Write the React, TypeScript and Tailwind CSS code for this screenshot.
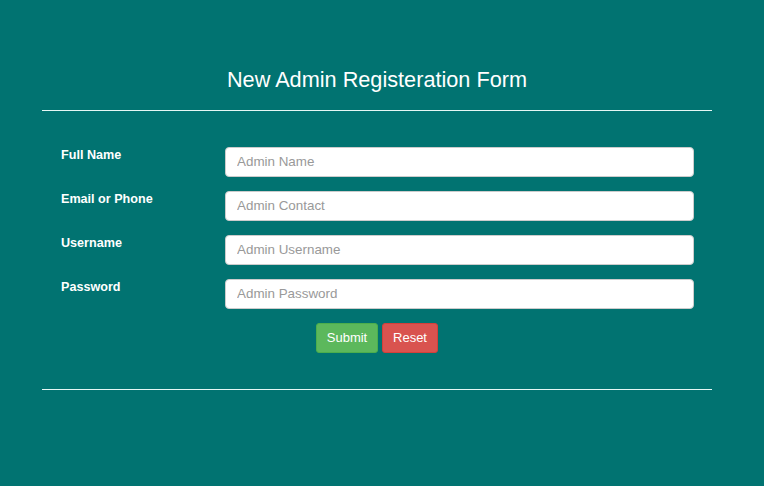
import React from "react";

const fields = [
  { label: "Full Name", placeholder: "Admin Name", type: "text" },
  { label: "Email or Phone", placeholder: "Admin Contact", type: "text" },
  { label: "Username", placeholder: "Admin Username", type: "text" },
  { label: "Password", placeholder: "Admin Password", type: "password" },
];

export default function App() {
  return (
    <div className="min-h-[486px] w-full bg-[#017371] font-['Liberation_Sans',Arial,sans-serif] text-white">
      <div className="ml-[42px] w-[670px] pt-[65px]">
        <h1 className="text-center text-[21.7px] leading-[30px] font-normal">New Admin Registeration Form</h1>
        <div className="mt-[15px] h-px bg-[#e6f7f5]"></div>

        {/* form */}
        <form className="pt-[36px] pl-[19px] pr-[18px]" onSubmit={(e) => e.preventDefault()}>
          <div className="flex flex-col gap-[14px]">
            {fields.map((f) => (
              <div key={f.label} className="flex items-start">
                <label className="w-[164px] text-[12.6px] font-bold leading-[16px]">{f.label}</label>
                <input
                  type={f.type}
                  placeholder={f.placeholder}
                  className="h-[30px] flex-1 rounded-[4px] border border-[#ccc] bg-white px-[11px] pb-[1px] text-[13.4px] text-[#555] placeholder:text-[#999] outline-none"
                />
              </div>
            ))}
          </div>
          <div className="mt-[14px] flex gap-[4px] pl-[255px]">
            <button type="submit" className="h-[30px] w-[62px] rounded-[3px] border border-[#4cae4c] bg-[#5cb85c] text-[13px] text-white">Submit</button>
            <button type="reset" className="h-[30px] w-[56px] rounded-[3px] border border-[#d43f3a] bg-[#d9534f] text-[13px] text-white">Reset</button>
          </div>
        </form>

        <div className="mt-[36px] h-px bg-[#e6f7f5]"></div>
      </div>
    </div>
  );
}
